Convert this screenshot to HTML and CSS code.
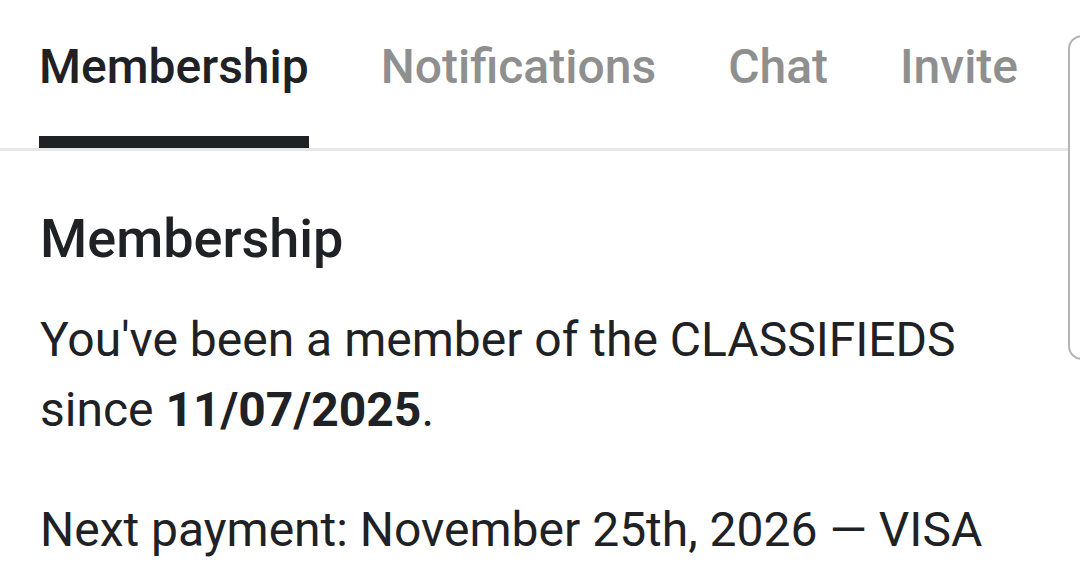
FILE: index.html
```html
<!DOCTYPE html>
<html lang="en">
<head>
<meta charset="utf-8">
<title>Membership</title>
<link rel="stylesheet" href="styles.css">
</head>
<body>
<div class="page">
  <nav class="tabs">
    <div class="tab active">Membership</div>
    <div class="tab">Notifications</div>
    <div class="tab">Chat</div>
    <div class="tab">Invite</div>
  </nav>
  <section class="content">
    <h1 class="title">Membership</h1>
    <p class="text">You've been a member of the CLASSIFIEDS since <strong>11/07/2025</strong>.</p>
    <p class="text">Next payment: November 25th, 2026 — VISA</p>
  </section>
  <div class="side-card"></div>
</div>
</body>
</html>
```

FILE: styles.css
```css
html, body {
  margin: 0;
  padding: 0;
  background: #ffffff;
}
body {
  font-family: Roboto, "Noto Sans", sans-serif;
  color: #202124;
  overflow: hidden;
}
.page {
  position: relative;
  width: 1080px;
  height: 566px;
  overflow: hidden;
}
.tabs {
  display: flex;
  gap: 72px;
  padding: 0 0 0 39px;
  height: 148px;
  border-bottom: 3px solid #e6e6e6;
  box-sizing: content-box;
  width: 1029px;
}
.tab {
  font-size: 48px;
  font-weight: 500;
  color: #8f8f8f;
  padding-top: 40px;
  line-height: 54px;
  height: 108px;
  box-sizing: content-box;
  white-space: nowrap;
}
.tab.active {
  color: #202124;
  border-bottom: 12px solid #202124;
  height: 96px;
}
.content {
  padding: 0 40px;
}
.title {
  margin: 58px 0 0;
  font-size: 54px;
  font-weight: 500;
  line-height: 60px;
}
.text {
  margin: 36px 0 0;
  font-size: 48px;
  line-height: 70px;
  font-weight: 400;
  max-width: 960px;
}
.text + .text {
  margin-top: 50px;
}
.text strong {
  font-weight: 700;
}
.side-card {
  position: absolute;
  left: 1068px;
  top: 35px;
  width: 100px;
  height: 321px;
  border: 2px solid #b4b4b4;
  border-radius: 14px;
  background: transparent;
}
```
